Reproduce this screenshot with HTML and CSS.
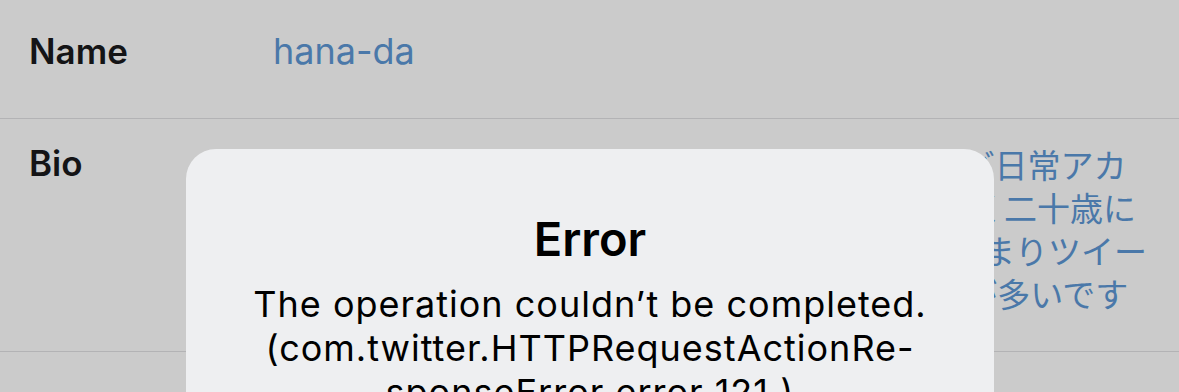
FILE: index.html
```html
<!DOCTYPE html>
<html lang="ja">
<head>
<meta charset="utf-8">
<title>Profile</title>
<link rel="stylesheet" href="styles.css">
</head>
<body>
<div class="screen">
  <div class="list">
    <div class="row row-name">
      <div class="label">Name</div>
      <div class="value">hana-da</div>
    </div>
    <div class="row row-bio">
      <div class="label">Bio</div>
      <div class="value bio">
        <div class="bio-line">社会人一年目オタクです。推しや仕事のことなど日常アカ</div>
        <div class="bio-line">ウントです。二月生まれで、先月ついに!ようやく二十歳に</div>
        <div class="bio-line">なりました。お酒デビュー! 二回目。忙しくてあまりツイー</div>
        <div class="bio-line">トは少ないですが、毎日三回は見るのでいいねが多いです</div>
      </div>
    </div>
    <div class="row row-empty"></div>
  </div>

  <div class="alert" role="alertdialog">
    <div class="alert-title">Error</div>
    <div class="alert-message">The operation couldn’t be completed.<br>(com.twitter.HTTPRequestActionRe-<br>sponseError error 121.)</div>
  </div>
</div>
</body>
</html>
```

FILE: styles.css
```css
html, body {
  margin: 0;
  padding: 0;
}

body {
  background: #cbcbcb;
  font-family: "Inter", "Noto Sans CJK JP", sans-serif;
  overflow: hidden;
}

.screen {
  position: relative;
  width: 1179px;
  height: 392px;
  overflow: hidden;
}

.list {
  display: flex;
  flex-direction: column;
}

.row {
  display: flex;
  align-items: baseline;
  padding-left: 29px;
  border-bottom: 1px solid #b3b3b5;
}

.label {
  width: 244px;
  flex: none;
  font-size: 35px;
  line-height: 44px;
  font-weight: 600;
  color: #141416;
}

.value {
  font-size: 36px;
  line-height: 44px;
  color: #4a78a9;
}

.row-name {
  height: 119px;
  box-sizing: border-box;
  padding-top: 29px;
}

.row-bio {
  align-items: flex-start;
  padding-top: 22px;
  padding-bottom: 36px;
}

.bio {
  margin-top: 2px;
  font-family: "Noto Sans CJK JP", sans-serif;
  font-size: 33px;
  line-height: 43px;
}

.bio-line {
  white-space: pre;
}

.row-empty {
  height: 60px;
  border-bottom: none;
}

.alert {
  position: absolute;
  left: 186px;
  top: 149px;
  width: 808px;
  height: 400px;
  box-sizing: border-box;
  padding-top: 62px;
  background: #eeeff1;
  border-radius: 30px;
  text-align: center;
  color: #000;
}

.alert-title {
  font-size: 47px;
  line-height: 56px;
  font-weight: 600;
}

.alert-message {
  margin-top: 15px;
  font-size: 36px;
  line-height: 44px;
  letter-spacing: 1px;
  font-weight: 400;
}
```
